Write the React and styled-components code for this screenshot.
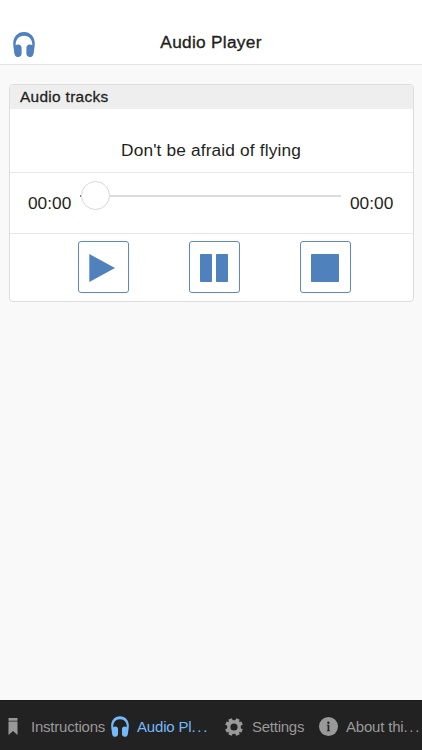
import styled, { createGlobalStyle } from 'styled-components';

const GlobalStyle = createGlobalStyle`
    * {
        box-sizing: border-box;
    }

    body {
        margin: 0;
        background: #f9f9f9;
        color: #1f1f21;
        font-family: "Liberation Sans", Arial, sans-serif;
    }
`;

const Page = styled.div`
    display: flex;
    flex-direction: column;
    height: 100vh;
    overflow: hidden;
`;

const Toolbar = styled.header`
    display: grid;
    grid-template-columns: 48px 1fr 48px;
    height: 65px;
    padding-top: 22px;
    align-items: center;
    background: #fff;
    border-bottom: 1px solid #e3e3e3;
`;

const Logo = styled.div`
    display: flex;
    padding: 2px 0 0 13px;
    color: #4f81bc;
`;

const Title = styled.h1`
    margin: 0;
    padding-bottom: 2px;
    font-size: 17.3px;
    font-weight: 400;
    line-height: 40px;
    letter-spacing: 0.28px;
    text-align: center;
    -webkit-text-stroke: 0.35px #1f1f21;
`;

const Content = styled.main`
    flex: 1;
    padding: 19px 8px 0 9px;
`;

const Panel = styled.section`
    border: 1px solid #ddd;
    border-radius: 4px;
    background: #fff;
    overflow: hidden;
`;

const PanelTitle = styled.h2`
    margin: 0;
    height: 24px;
    padding-left: 10px;
    background: #eee;
    font-size: 15.4px;
    font-weight: 400;
    line-height: 24px;
    letter-spacing: 0.32px;
    -webkit-text-stroke: 0.3px #1f1f21;
`;

const TrackName = styled.p`
    margin: 0;
    height: 64px;
    padding: 31px 1px 0 0;
    border-bottom: 1px solid #e8e8e8;
    font-size: 17.3px;
    line-height: 20px;
    letter-spacing: 0.15px;
    text-align: center;
`;

const ProgressRow = styled.div`
    display: flex;
    height: 61px;
    padding: 0 20px 0 18px;
    border-bottom: 1px solid #e8e8e8;
`;

const Time = styled.span`
    width: 43px;
    padding-top: 20px;
    font-size: 17.3px;
    line-height: 20px;
`;

const Slider = styled.div`
    display: flex;
    align-items: center;
    flex: 1;
    height: 29px;
    margin: 8px 9px 0 9px;
`;

const Played = styled.div`
    width: 1px;
    height: 2px;
    background: #6b7fa8;
`;

const Thumb = styled.div`
    width: 29px;
    height: 29px;
    border: 1px solid #d8d8da;
    border-radius: 50%;
    background: #fff;
`;

const Rail = styled.div`
    flex: 1;
    height: 2px;
    background: #dcdcdc;
`;

const Controls = styled.div`
    display: flex;
    justify-content: center;
    gap: 60px;
    height: 67px;
    padding: 7px 0 0 6px;
`;

const ControlButton = styled.button`
    display: flex;
    width: 51px;
    height: 52px;
    padding: 2px 2px 0 0;
    align-items: center;
    justify-content: center;
    border: 1px solid #5b8ac0;
    border-radius: 3px;
    background: #fff;
    color: #4f81bc;
`;

const TabBar = styled.nav`
    display: grid;
    grid-template-columns: 105px 106px 105px 106px;
    height: 50px;
    background: #222;
    border-top: 1px solid #191919;
`;

const Tab = styled.a`
    display: flex;
    align-items: center;
    height: 51px;
    padding-left: ${props => props.$start}px;
    gap: ${props => props.$gap}px;
    color: ${props => (props.$active ? '#75b9fa' : '#999')};
    font-size: 15px;
    line-height: 18px;
    letter-spacing: ${props => props.$spacing}px;
    white-space: nowrap;

    svg {
        flex: none;
    }
`;

const Dots = styled.span`
    letter-spacing: 1.7px;
`;

function Headphones({ width, height }) {
    return (
        <svg width={width} height={height} viewBox="0 0 22 25" fill="currentColor">
            <path d="M11 0C4.6 0 .2 4.8.2 11.8c0 2.2.4 4.4.8 6.4.1 3.8 1 6.8 3.9 6.8 2.4 0 3.7-1.2 3.7-3.2v-6.1c0-2-1.3-3.3-3.4-3.3-1.1 0-1.9.3-2.5.9C2.4 7.8 5.6 3.7 11 3.7s8.6 4.1 8.3 9.6c-.6-.6-1.4-.9-2.5-.9-2.1 0-3.4 1.3-3.4 3.3v6.1c0 2 1.3 3.2 3.7 3.2 2.9 0 3.8-3 3.9-6.8.4-2 .8-4.2.8-6.4C21.8 4.8 17.4 0 11 0Z" />
        </svg>
    );
}

function Bookmark() {
    return (
        <svg width="10" height="17" viewBox="0 0 10 17" fill="currentColor">
            <path d="M.5 0h9v2.8h-9ZM.5 3.6h9V17L5 13 .5 17Z" />
        </svg>
    );
}

function Gear() {
    return (
        <svg width="18" height="18" viewBox="-9 -9 18 18" fill="currentColor">
            <path
                fillRule="evenodd"
                d="M-1.4-7Q0-6.4 1.4-7L2.2-8.8 5.6-7.4 5.1-5.6Q5.2-5.2 5.6-5.1L7.4-5.6 8.8-2.2 7-1.4Q6.4 0 7 1.4L8.8 2.2 7.4 5.6 5.6 5.1Q5.2 5.2 5.1 5.6L5.6 7.4 2.2 8.8 1.4 7Q0 6.4-1.4 7L-2.2 8.8-5.6 7.4-5.1 5.6Q-5.2 5.2-5.6 5.1L-7.4 5.6-8.8 2.2-7 1.4Q-6.4 0-7-1.4L-8.8-2.2-7.4-5.6-5.6-5.1Q-5.2-5.2-5.1-5.6L-5.6-7.4-2.2-8.8ZM0-3.6a3.6 3.6 0 1 0 0 7.2a3.6 3.6 0 1 0 0-7.2Z"
            />
        </svg>
    );
}

function Info() {
    return (
        <svg width="19" height="19" viewBox="0 0 19 19">
            <circle cx="9.5" cy="9.5" r="9.5" fill="currentColor" />
            <circle cx="9.4" cy="5.7" r="1.2" fill="#222" />
            <path d="M7.7 7.8h2.6v5.6h.9v.8H7.7v-.8h.9V8.6h-.9Z" fill="#222" />
        </svg>
    );
}

function App() {
    return (
        <Page>
            <GlobalStyle />
            <Toolbar>
                <Logo>
                    <Headphones width={22} height={25} />
                </Logo>
                <Title>Audio Player</Title>
            </Toolbar>
            <Content>
                <Panel>
                    <PanelTitle>Audio tracks</PanelTitle>
                    <TrackName>Don't be afraid of flying</TrackName>
                    <ProgressRow>
                        <Time>00:00</Time>
                        <Slider>
                            <Played />
                            <Thumb />
                            <Rail />
                        </Slider>
                        <Time>00:00</Time>
                    </ProgressRow>
                    <Controls>
                        <ControlButton aria-label="Play">
                            <svg width="28" height="28" viewBox="0 0 28 28" fill="currentColor">
                                <path d="M.3 0v28L26 14Z" />
                            </svg>
                        </ControlButton>
                        <ControlButton aria-label="Pause">
                            <svg width="28" height="28" viewBox="0 0 28 28" fill="currentColor">
                                <rect width="12" height="28" rx="0.8" />
                                <rect x="16" width="12" height="28" rx="0.8" />
                            </svg>
                        </ControlButton>
                        <ControlButton aria-label="Stop">
                            <svg width="28" height="28" viewBox="0 0 28 28" fill="currentColor">
                                <rect width="28" height="28" rx="0.8" />
                            </svg>
                        </ControlButton>
                    </Controls>
                </Panel>
            </Content>
            <TabBar>
                <Tab $start={8} $gap={13} $spacing={-0.22}>
                    <Bookmark />
                    <span>Instructions</span>
                </Tab>
                <Tab $start={6} $gap={8} $spacing={-0.18} $active>
                    <Headphones width={18} height={21} />
                    <span>Audio Pl<Dots>...</Dots></span>
                </Tab>
                <Tab $start={14} $gap={9} $spacing={-0.25}>
                    <Gear />
                    <span>Settings</span>
                </Tab>
                <Tab $start={3} $gap={8} $spacing={-0.2}>
                    <Info />
                    <span>About thi<Dots>...</Dots></span>
                </Tab>
            </TabBar>
        </Page>
    );
}

export default App;
